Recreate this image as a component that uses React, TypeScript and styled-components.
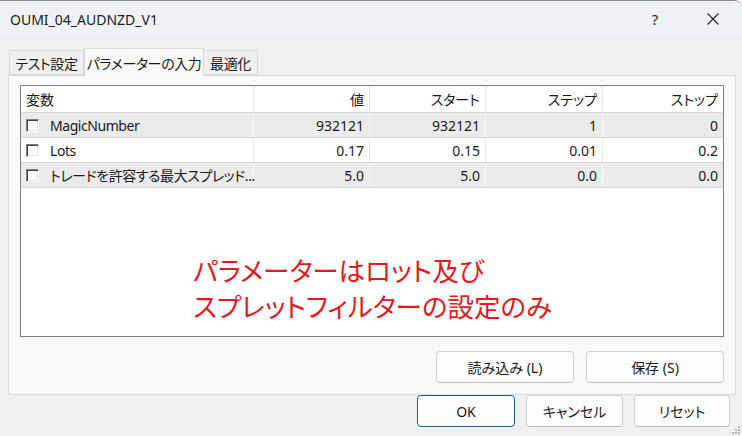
import React from 'react';
import styled, { createGlobalStyle } from 'styled-components';

const Global = createGlobalStyle`
  html, body { margin: 0; padding: 0; background: #ffffff; }
  body { font-family: "Noto Sans", "Noto Sans CJK JP", sans-serif; }
`;

const Window = styled.div`
  position: relative;
  width: 742px;
  height: 436px;
  box-sizing: border-box;
  background: #f0f0f0;
  border-top: 1px solid #8a8a8a;
  border-top-right-radius: 8px;
  overflow: hidden;
  display: flex;
  flex-direction: column;
  font-family: "Noto Sans", "Noto Sans CJK JP", sans-serif;
  font-size: 14px;
  color: #1a1a1a;
  font-feature-settings: "palt";
`;

const TitleBar = styled.div`
  height: 36px;
  flex: none;
  background: #eef2f7;
  display: flex;
  align-items: center;
  padding-left: 10px;
`;

const Title = styled.div`
  flex: 1;
  font-size: 14px;
  color: #1b1b1b;
  padding-top: 1px;
`;

const TitleButton = styled.div`
  width: 58px;
  height: 36px;
  display: flex;
  align-items: center;
  justify-content: center;
  font-size: 15px;
  color: #222;
`;

const Body = styled.div`
  flex: 1;
  display: flex;
  flex-direction: column;
  padding: 11px 6px 0 8px;
`;

const TabStrip = styled.div`
  display: flex;
  align-items: flex-end;
  height: 27px;
  padding-left: 1px;
`;

const Tab = styled.div<{ $active?: boolean; $w: number }>`
  position: relative;
  box-sizing: border-box;
  width: ${p => p.$w}px;
  height: ${p => (p.$active ? 28 : 25)}px;
  margin-bottom: ${p => (p.$active ? -1 : 0)}px;
  z-index: ${p => (p.$active ? 2 : 1)};
  background: ${p => (p.$active ? '#f9f9f9' : '#f0f0f0')};
  border: 1px solid #d9d9d9;
  border-bottom: ${p => (p.$active ? 'none' : '1px solid #d9d9d9')};
  margin-left: ${p => (p.$active ? 0 : -1)}px;
  display: flex;
  align-items: center;
  justify-content: center;
  padding-top: ${p => (p.$active ? 0 : 1)}px;
  font-size: 14px;
  letter-spacing: -0.4px;
  white-space: nowrap;
  color: #1a1a1a;
  &:first-child { margin-left: 0; }
`;

const Panel = styled.div`
  position: relative;
  z-index: 1;
  box-sizing: border-box;
  width: 728px;
  height: 320px;
  background: #f9f9f9;
  border: 1px solid #dadada;
  padding: 9px 11px 10px;
  display: flex;
  flex-direction: column;
`;

const ListBox = styled.div`
  box-sizing: border-box;
  height: 252px;
  border: 1px solid #7f7f7f;
  background: #ffffff;
  display: flex;
  flex-direction: column;
`;

const Row = styled.div<{ $head?: boolean; $shade?: boolean }>`
  display: grid;
  grid-template-columns: 233px 116px 116px 117px 1fr;
  box-sizing: border-box;
  height: ${p => (p.$head ? 27 : 25)}px;
  background: ${p => (p.$shade ? '#ebebeb' : '#ffffff')};
  border-bottom: 1px solid #d6d6d6;
`;

const Cell = styled.div<{ $right?: boolean; $shade?: boolean }>`
  box-sizing: border-box;
  display: flex;
  align-items: center;
  justify-content: ${p => (p.$right ? 'flex-end' : 'flex-start')};
  padding: 0 5px;
  min-width: 0;
  border-right: 1px solid ${p => (p.$shade ? '#f7f7f7' : '#e6e6e6')};
  white-space: nowrap;
  color: #1a1a1a;
  &:last-child { border-right: none; }
`;

const Label = styled.span`
  white-space: nowrap;
  letter-spacing: -0.45px;
`;

const Check = styled.span`
  flex: none;
  box-sizing: border-box;
  width: 13px;
  height: 13px;
  margin-right: 11px;
  background: #ffffff;
  border-style: solid;
  border-width: 1px;
  border-color: #808080 #ffffff #ffffff #808080;
  box-shadow: inset 1px 1px 0 #404040, inset -1px -1px 0 #e3e3e3;
`;

const Annotation = styled.div`
  margin: 64px 0 0 172px;
  color: #e21a1c;
  font-family: "Noto Sans CJK JP", sans-serif;
  font-size: 26.5px;
  line-height: 36px;
  font-feature-settings: "palt";
`;

const AnnotationLine = styled.div`
  white-space: nowrap;
`;

const ButtonRow = styled.div`
  display: flex;
  justify-content: flex-end;
  gap: 12px;
  margin-top: 14px;
`;

const BottomBar = styled.div`
  display: flex;
  justify-content: flex-end;
  gap: 11px;
  padding-right: 6px;
`;

const Button = styled.button<{ $w: number; $primary?: boolean }>`
  box-sizing: border-box;
  width: ${p => p.$w}px;
  height: 32px;
  border: 1px solid ${p => (p.$primary ? '#1d5f92' : '#d0d0d0')};
  border-bottom-color: ${p => (p.$primary ? '#1d5f92' : '#bdbdbd')};
  border-radius: 4px;
  background: #fdfdfd;
  font-family: "Noto Sans", "Noto Sans CJK JP", sans-serif;
  font-size: 14px;
  font-feature-settings: "palt";
  color: #1a1a1a;
  padding: 0;
`;

const Grip = styled.svg`
  position: absolute;
  right: 2px;
  bottom: 2px;
`;

type Param = { name: string; value: string; start: string; step: string; stop: string };

const params: Param[] = [
  { name: 'MagicNumber', value: '932121', start: '932121', step: '1', stop: '0' },
  { name: 'Lots', value: '0.17', start: '0.15', step: '0.01', stop: '0.2' },
  { name: 'トレードを許容する最大スプレッド...', value: '5.0', start: '5.0', step: '0.0', stop: '0.0' },
];

export default function App() {
  return (
    <>
      <Global />
      <Window>
        <TitleBar>
          <Title>OUMI_04_AUDNZD_V1</Title>
          <TitleButton>?</TitleButton>
          <TitleButton>
            <svg width="14" height="14" viewBox="0 0 14 14">
              <path d="M1.5 1.5 L12.5 12.5 M12.5 1.5 L1.5 12.5" stroke="#222" strokeWidth="1.1" fill="none" />
            </svg>
          </TitleButton>
        </TitleBar>
        <Body>
          <TabStrip>
            <Tab $w={75}>テスト設定</Tab>
            <Tab $w={120} $active>パラメーターの入力</Tab>
            <Tab $w={55}>最適化</Tab>
          </TabStrip>
          <Panel>
            <ListBox>
              <Row $head>
                <Cell>変数</Cell>
                <Cell $right>値</Cell>
                <Cell $right>スタート</Cell>
                <Cell $right>ステップ</Cell>
                <Cell $right>ストップ</Cell>
              </Row>
              {params.map((p, i) => {
                const shade = i % 2 === 0;
                return (
                  <Row key={p.name} $shade={shade}>
                    <Cell $shade={shade}>
                      <Check />
                      <Label>{p.name}</Label>
                    </Cell>
                    <Cell $right $shade={shade}>{p.value}</Cell>
                    <Cell $right $shade={shade}>{p.start}</Cell>
                    <Cell $right $shade={shade}>{p.step}</Cell>
                    <Cell $right $shade={shade}>{p.stop}</Cell>
                  </Row>
                );
              })}
              <Annotation>
                <AnnotationLine>パラメーターはロット及び</AnnotationLine>
                <AnnotationLine>スプレットフィルターの設定のみ</AnnotationLine>
              </Annotation>
            </ListBox>
            <ButtonRow>
              <Button $w={138}>読み込み (L)</Button>
              <Button $w={138}>保存 (S)</Button>
            </ButtonRow>
          </Panel>
          <BottomBar>
            <Button $w={98} $primary>OK</Button>
            <Button $w={97}>キャンセル</Button>
            <Button $w={96}>リセット</Button>
          </BottomBar>
        </Body>
        <Grip width="8" height="8" viewBox="0 0 8 8">
          <rect x="6" y="0" width="2" height="2" fill="#b8b8b8" />
          <rect x="3" y="3" width="2" height="2" fill="#b8b8b8" />
          <rect x="6" y="3" width="2" height="2" fill="#b8b8b8" />
          <rect x="0" y="6" width="2" height="2" fill="#b8b8b8" />
          <rect x="3" y="6" width="2" height="2" fill="#b8b8b8" />
          <rect x="6" y="6" width="2" height="2" fill="#b8b8b8" />
        </Grip>
      </Window>
    </>
  );
}
